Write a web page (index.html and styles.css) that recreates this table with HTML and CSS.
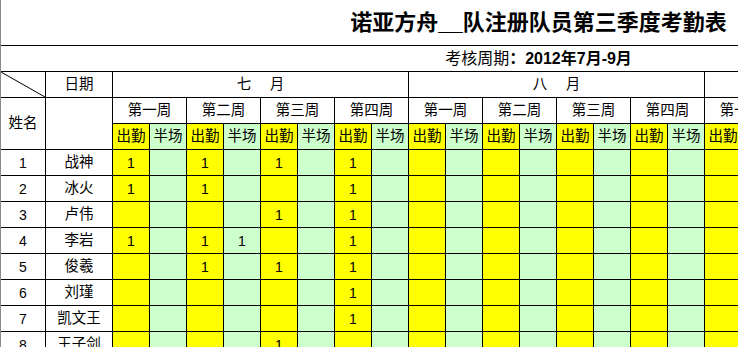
FILE: index.html
```html
<!DOCTYPE html>
<html lang="zh-CN">
<head>
<meta charset="utf-8">
<title>诺亚方舟__队注册队员第三季度考勤表</title>
<link rel="stylesheet" href="styles.css">
</head>
<body>
<div class="sheet">
  <div class="grid">
    <div class="title">诺亚方舟__队注册队员第三季度考勤表</div>
    <div class="subtitle">考核周期<b>：2012年7月-9月</b></div>

    <div class="diag"><svg viewBox="0 0 44 25" preserveAspectRatio="none"><line x1="0" y1="0" x2="44" y2="25" stroke="#000" stroke-width="1"/></svg></div>
    <div class="w">日期</div>
    <div class="w month">七　月</div>
    <div class="w month">八　月</div>
    <div class="w month">九　月</div>

    <div class="w tall">姓名</div>
    <div class="w tall"></div>
    <div class="w wk">第一周</div><div class="w wk">第二周</div><div class="w wk">第三周</div><div class="w wk">第四周</div>
    <div class="w wk">第一周</div><div class="w wk">第二周</div><div class="w wk">第三周</div><div class="w wk">第四周</div>
    <div class="w wk">第一周</div><div class="w wk">第二周</div><div class="w wk">第三周</div><div class="w wk">第四周</div>

    <div class="y">出勤</div><div class="g">半场</div><div class="y">出勤</div><div class="g">半场</div><div class="y">出勤</div><div class="g">半场</div><div class="y">出勤</div><div class="g">半场</div>
    <div class="y">出勤</div><div class="g">半场</div><div class="y">出勤</div><div class="g">半场</div><div class="y">出勤</div><div class="g">半场</div><div class="y">出勤</div><div class="g">半场</div>
    <div class="y">出勤</div><div class="g">半场</div><div class="y">出勤</div><div class="g">半场</div><div class="y">出勤</div><div class="g">半场</div><div class="y">出勤</div><div class="g">半场</div>

    <div class="w num">1</div><div class="w">战神</div>
    <div class="y num">1</div><div class="g"></div><div class="y num">1</div><div class="g"></div><div class="y num">1</div><div class="g"></div><div class="y num">1</div><div class="g"></div>
    <div class="y"></div><div class="g"></div><div class="y"></div><div class="g"></div><div class="y"></div><div class="g"></div><div class="y"></div><div class="g"></div>
    <div class="y"></div><div class="g"></div><div class="y"></div><div class="g"></div><div class="y"></div><div class="g"></div><div class="y"></div><div class="g"></div>

    <div class="w num">2</div><div class="w">冰火</div>
    <div class="y num">1</div><div class="g"></div><div class="y num">1</div><div class="g"></div><div class="y"></div><div class="g"></div><div class="y num">1</div><div class="g"></div>
    <div class="y"></div><div class="g"></div><div class="y"></div><div class="g"></div><div class="y"></div><div class="g"></div><div class="y"></div><div class="g"></div>
    <div class="y"></div><div class="g"></div><div class="y"></div><div class="g"></div><div class="y"></div><div class="g"></div><div class="y"></div><div class="g"></div>

    <div class="w num">3</div><div class="w">卢伟</div>
    <div class="y"></div><div class="g"></div><div class="y"></div><div class="g"></div><div class="y num">1</div><div class="g"></div><div class="y num">1</div><div class="g"></div>
    <div class="y"></div><div class="g"></div><div class="y"></div><div class="g"></div><div class="y"></div><div class="g"></div><div class="y"></div><div class="g"></div>
    <div class="y"></div><div class="g"></div><div class="y"></div><div class="g"></div><div class="y"></div><div class="g"></div><div class="y"></div><div class="g"></div>

    <div class="w num">4</div><div class="w">李岩</div>
    <div class="y num">1</div><div class="g"></div><div class="y num">1</div><div class="g num">1</div><div class="y"></div><div class="g"></div><div class="y num">1</div><div class="g"></div>
    <div class="y"></div><div class="g"></div><div class="y"></div><div class="g"></div><div class="y"></div><div class="g"></div><div class="y"></div><div class="g"></div>
    <div class="y"></div><div class="g"></div><div class="y"></div><div class="g"></div><div class="y"></div><div class="g"></div><div class="y"></div><div class="g"></div>

    <div class="w num">5</div><div class="w">俊羲</div>
    <div class="y"></div><div class="g"></div><div class="y num">1</div><div class="g"></div><div class="y num">1</div><div class="g"></div><div class="y num">1</div><div class="g"></div>
    <div class="y"></div><div class="g"></div><div class="y"></div><div class="g"></div><div class="y"></div><div class="g"></div><div class="y"></div><div class="g"></div>
    <div class="y"></div><div class="g"></div><div class="y"></div><div class="g"></div><div class="y"></div><div class="g"></div><div class="y"></div><div class="g"></div>

    <div class="w num">6</div><div class="w">刘瑾</div>
    <div class="y"></div><div class="g"></div><div class="y"></div><div class="g"></div><div class="y"></div><div class="g"></div><div class="y num">1</div><div class="g"></div>
    <div class="y"></div><div class="g"></div><div class="y"></div><div class="g"></div><div class="y"></div><div class="g"></div><div class="y"></div><div class="g"></div>
    <div class="y"></div><div class="g"></div><div class="y"></div><div class="g"></div><div class="y"></div><div class="g"></div><div class="y"></div><div class="g"></div>

    <div class="w num">7</div><div class="w">凯文王</div>
    <div class="y"></div><div class="g"></div><div class="y"></div><div class="g"></div><div class="y"></div><div class="g"></div><div class="y num">1</div><div class="g"></div>
    <div class="y"></div><div class="g"></div><div class="y"></div><div class="g"></div><div class="y"></div><div class="g"></div><div class="y"></div><div class="g"></div>
    <div class="y"></div><div class="g"></div><div class="y"></div><div class="g"></div><div class="y"></div><div class="g"></div><div class="y"></div><div class="g"></div>

    <div class="w num">8</div><div class="w">王子剑</div>
    <div class="y"></div><div class="g"></div><div class="y"></div><div class="g"></div><div class="y num">1</div><div class="g"></div><div class="y"></div><div class="g"></div>
    <div class="y"></div><div class="g"></div><div class="y"></div><div class="g"></div><div class="y"></div><div class="g"></div><div class="y"></div><div class="g"></div>
    <div class="y"></div><div class="g"></div><div class="y"></div><div class="g"></div><div class="y"></div><div class="g"></div><div class="y"></div><div class="g"></div>
  </div>
</div>
</body>
</html>
```
FILE: styles.css
```css
html, body {
  margin: 0;
  padding: 0;
  background: #fff;
  overflow: hidden;
}
.sheet {
  width: 737px;
  height: 347px;
  overflow: hidden;
  border-left: 1px solid #8a8a8a;
  font-family: "Liberation Sans", "Noto Sans CJK SC", sans-serif;
  font-size: 14.5px;
  color: #000;
}
.grid {
  display: grid;
  grid-template-columns: 44px 66px repeat(24, 36px);
  grid-template-rows: 45px repeat(12, 25px);
  gap: 1px;
  width: 999px;
  background: #000;
}
.grid > div {
  display: flex;
  align-items: center;
  justify-content: center;
  white-space: nowrap;
  line-height: 1;
}
.title {
  grid-column: 1 / -1;
  background: #fff;
  font-size: 22px;
  font-weight: bold;
  padding-left: 76px;
  padding-top: 1px;
}
.subtitle {
  grid-column: 1 / -1;
  background: #fff;
  font-size: 16px;
  padding-left: 76px;
}
.subtitle b {
  font-weight: bold;
}
.w { background: #fff; }
.y { background: #ffff00; }
.g { background: #ccffcc; }
.diag {
  background: #fff;
  padding: 0;
}
.diag svg {
  display: block;
  width: 100%;
  height: 100%;
}
.month {
  grid-column: span 8;
  letter-spacing: 2px;
  padding-left: 2px;
}
.tall { grid-row: span 2; }
.wk { grid-column: span 2; }
.num {
  font-size: 14px;
}
```
